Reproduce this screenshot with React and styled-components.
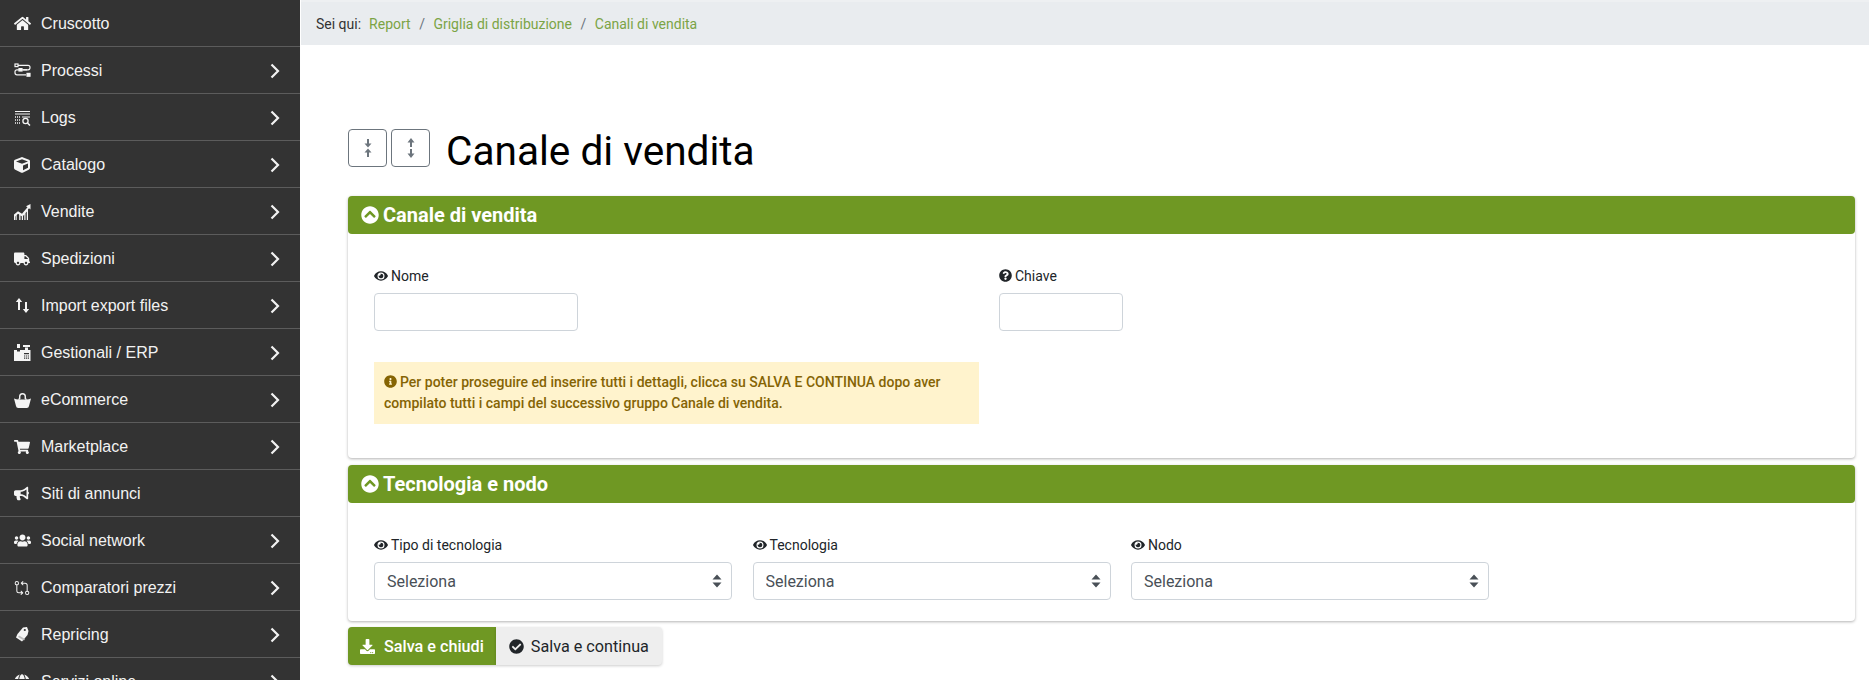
import React from 'react';
import styled, { createGlobalStyle } from 'styled-components';
import {
  FaHome, FaCube, FaTruck, FaShoppingCart, FaBullhorn, FaUsers, FaGlobe,
  FaEye, FaQuestionCircle, FaInfoCircle, FaChevronCircleUp, FaDownload, FaCheckCircle,
} from 'react-icons/fa';
import { GoGitCompare } from 'react-icons/go';

const Global = createGlobalStyle`
  html, body { margin: 0; padding: 0; background: #fff; }
  body { font-family: Roboto, "Liberation Sans", sans-serif; font-size: 14px; color: #212529; }
  * { box-sizing: border-box; }
`;

const Page = styled.div`
  display: flex;
  width: 1869px;
  height: 680px;
  overflow: hidden;
`;

const Sidebar = styled.nav`
  flex: 0 0 300px;
  background: #333;
  height: 680px;
  overflow: hidden;
`;

const NavRow = styled.a`
  display: flex;
  align-items: center;
  height: 47px;
  padding: 1px 20px 0 14px;
  border-bottom: 1px solid #5c5c5c;
  color: #f2f2f2;
  font: 16px/20px "Liberation Sans", Arial, sans-serif;
`;

const NavIcon = styled.span`
  flex: 0 0 27px;
  display: flex;
  align-items: center;
  color: #f5f5f5;
`;

const NavLabel = styled.span`
  flex: 1;
`;

const Main = styled.main`
  flex: 1;
  min-width: 0;
`;

const Breadcrumb = styled.div`
  display: flex;
  align-items: center;
  height: 45px;
  margin-left: 1px;
  padding-left: 15px;
  background: #e9ecef;
  border-top: 2px solid #eef0f2;
  color: #333;
  font-size: 14px;
`;

const Here = styled.span`
  margin-right: 8px;
`;

const Crumb = styled.a`
  color: #7ba445;
`;

const Sep = styled.span`
  color: #6c757d;
  margin: 0 8.5px;
`;

const Content = styled.div`
  padding: 84px 14.5px 0 48px;
`;

const TitleRow = styled.div`
  display: flex;
  align-items: center;
  height: 38px;
  margin-bottom: 29px;
`;

const ToggleBtn = styled.button`
  width: 39px;
  height: 38px;
  margin-right: 4px;
  padding: 0;
  display: flex;
  align-items: center;
  justify-content: center;
  background: #fff;
  border: 1px solid #6c757d;
  border-radius: 4px;
`;

const Title = styled.h1`
  margin: 0 0 0 12px;
  padding-top: 6px;
  font-size: 40.6px;
  font-weight: 400;
  line-height: 48px;
  color: #000;
`;

const Card = styled.section`
  background: #fff;
  border-radius: 4px;
  box-shadow: 0 1px 3px rgba(0, 0, 0, 0.3);
  & + & {
    margin-top: 7px;
  }
`;

const CardHead = styled.header`
  display: flex;
  align-items: center;
  gap: 4px;
  height: 38px;
  padding-left: 13px;
  background: #6f9823;
  border-radius: 4px;
  color: #fff;
  font-size: 20px;
  font-weight: 700;
`;

const CardBody = styled.div`
  padding: ${p => p.$pad};
`;

const FieldRow = styled.div`
  display: flex;
  gap: ${p => p.$gap}px;
`;

const Field = styled.div`
  width: ${p => p.$w}px;
`;

const Label = styled.label`
  display: flex;
  align-items: center;
  gap: 3px;
  height: 21px;
  margin-bottom: 7px;
  font-size: 14px;
  color: #212529;
`;

const TextInput = styled.input`
  display: block;
  width: 100%;
  height: 38px;
  background: #fff;
  border: 1px solid #ced4da;
  border-radius: 4px;
`;

const SelectWrap = styled.div`
  position: relative;
`;

const Select = styled.select`
  display: block;
  width: 100%;
  height: 38px;
  padding: 0 12px;
  appearance: none;
  background: #fff;
  border: 1px solid #ced4da;
  border-radius: 4px;
  color: #495057;
  font: 16px Roboto, sans-serif;
`;

const Caret = styled.svg`
  position: absolute;
  right: 10px;
  top: 12px;
  pointer-events: none;
`;

const Alert = styled.div`
  width: 605px;
  height: 62px;
  margin-top: 31px;
  padding: 10px;
  background: #fff3cd;
  color: #856404;
  font-size: 14px;
  font-weight: 500;
  line-height: 21px;
  svg { vertical-align: -1px; margin-right: 3px; }
`;

const Actions = styled.div`
  display: flex;
  margin-top: 6px;
`;

const ActionBtn = styled.button`
  display: flex;
  align-items: center;
  gap: ${p => (p.$primary ? 9 : 7)}px;
  height: 38px;
  padding: ${p => (p.$primary ? '0 12px' : '0 13px')};
  border: 0;
  border-radius: ${p => (p.$primary ? '4px 0 0 4px' : '0 4px 4px 0')};
  background: ${p => (p.$primary ? '#6f9823' : '#eee')};
  color: ${p => (p.$primary ? '#fff' : '#212529')};
  font: ${p => (p.$primary ? 500 : 400)} 16.2px Roboto, sans-serif;
  box-shadow: 0 1px 3px rgba(0, 0, 0, 0.2);
`;

const Chevron = () => (
  <svg width="10" height="16" viewBox="0 0 10 16" fill="none" stroke="#f2f2f2" strokeWidth="2.2">
    <path d="M1.5 1.5 8 8l-6.5 6.5" />
  </svg>
);

const ProcessIcon = () => (
  <svg width="17" height="16" viewBox="0 0 17 16" fill="none" stroke="#f5f5f5" strokeWidth="1.2">
    <rect x="1" y="1" width="3" height="2.6" />
    <path d="M4 2.3h10q2 0 2 2v.5q0 2-2 2H3q-2 0-2 2v1q0 2 2 2h9" />
    <rect x="5" y="5.6" width="3" height="2.4" fill="#f5f5f5" />
    <path d="M9 6.8h4" />
    <rect x="13" y="10.4" width="3" height="2.8" fill="#f5f5f5" />
  </svg>
);

const LogsIcon = () => (
  <svg width="17" height="16" viewBox="0 0 17 16" fill="none" stroke="#f5f5f5">
    <path d="M1 1.5h15M1 4h15" strokeWidth="1" />
    <path d="M1 7h3M1 10h3M1 13h3M5 7h1M5 10h1M5 13h1" strokeWidth="1.3" strokeDasharray="1 1" />
    <path d="M8 7h8" strokeWidth="1" />
    <circle cx="11.5" cy="11" r="2.6" strokeWidth="1.3" />
    <path d="m13.5 13 2.5 2.5" strokeWidth="1.5" />
  </svg>
);

const SalesIcon = () => (
  <svg width="17" height="16" viewBox="0 0 17 16" fill="#f5f5f5">
    <path d="M0 16v-4.500L4 8.500l4 2.500 6-7V16h-1.200V7.500L11.500 9v7h-1.200v-5.500L9 12v4H7.800v-3.800l-1.300-.8v4.600H5.200v-5.500L4 9.800l-1.300 1.100V16H1.500v-4L1 12.500V16Z" />
    <path d="m0 10.600 4-3.400 4 2.500 5.500-6.500-1.500-1L16.500 0v5.500L15 4.300 8.300 12 4 9.400 0 12.800Z" />
  </svg>
);

const ArrowsIcon = () => (
  <svg width="17" height="17" viewBox="0 0 17 17" fill="#f5f5f5">
    <path d="M5 1 8.200 5H6v8H4V5H1.800ZM12 16l-3.200-4H11V5h2v7h2.200Z" />
  </svg>
);

const ErpIcon = () => (
  <svg width="17" height="17" viewBox="0 0 17 17" fill="#f5f5f5">
    <path d="M3 0h3v4H3zM9 1h7v2H9zM11 3.500h3V6h-3z" />
    <path d="M0 6h3v1.500h3V6h10.500v11H0Z" />
    <path d="M10 9h5v1.200h-5zM10 11.400h1.200v1.200H10zm1.900 0h1.200v1.200h-1.200zm1.900 0H15v1.200h-1.200zM10 13.600h1.200v1.200H10zm1.900 0h1.200v1.200h-1.200zm1.900 0H15v1.200h-1.200z" fill="#333" />
  </svg>
);

const BasketIcon = () => (
  <svg width="17" height="16" viewBox="0 0 17 16" fill="#f5f5f5">
    <path d="M5 7V4.500a3.500 3.500 0 0 1 7 0V7h-1.400V4.500a2.100 2.100 0 0 0-4.200 0V7Z" />
    <path d="M0 6.400c1.500.6 3 1 4.400 1.100v-.9h1.200v1h5.800v-1h1.200v.9c1.400-.1 2.900-.5 4.400-1.100L15 14q-.3 2-2.200 2H4.200Q2.300 16 2 14Z" />
  </svg>
);

const TagIcon = () => (
  <svg width="17" height="17" viewBox="0 0 17 17" fill="#f5f5f5">
    <path d="M9 1.500 13 1l1.500 4-1 4L8 15.500 2 11.500 3.500 8Z" />
    <circle cx="10.800" cy="4" r="1.100" fill="#333" />
    <path d="M4 11l6 3.500 1-1.500-6-3.500Z" fill="#bbb" />
  </svg>
);

const Toggle = ({ d }) => (
  <svg width="12" height="24" viewBox="0 0 12 24" fill="#6c757d">
    <path d={d} />
  </svg>
);

const navItems = [
  { label: 'Cruscotto', icon: <FaHome size={17} />, leaf: true },
  { label: 'Processi', icon: <ProcessIcon /> },
  { label: 'Logs', icon: <LogsIcon /> },
  { label: 'Catalogo', icon: <FaCube size={16} /> },
  { label: 'Vendite', icon: <SalesIcon /> },
  { label: 'Spedizioni', icon: <FaTruck size={16} /> },
  { label: 'Import export files', icon: <ArrowsIcon /> },
  { label: 'Gestionali / ERP', icon: <ErpIcon /> },
  { label: 'eCommerce', icon: <BasketIcon /> },
  { label: 'Marketplace', icon: <FaShoppingCart size={16} /> },
  { label: 'Siti di annunci', icon: <FaBullhorn size={15} />, leaf: true },
  { label: 'Social network', icon: <FaUsers size={17} /> },
  { label: 'Comparatori prezzi', icon: <GoGitCompare size={16} /> },
  { label: 'Repricing', icon: <TagIcon /> },
  { label: 'Servizi online', icon: <FaGlobe size={16} /> },
];

const SelectField = ({ label }) => (
  <Field $w={358}>
    <Label><FaEye size={14} />{label}</Label>
    <SelectWrap>
      <Select defaultValue="">
        <option value="">Seleziona</option>
      </Select>
      <Caret width="10" height="14" viewBox="0 0 10 14" fill="#495057">
        <path d="M5 0.500 9.500 5.500H.5ZM5 13.500.5 8.500h9Z" />
      </Caret>
    </SelectWrap>
  </Field>
);

export default function App() {
  return (
    <Page>
      <Global />
      <Sidebar>
        {navItems.map(item => (
          <NavRow key={item.label}>
            <NavIcon>{item.icon}</NavIcon>
            <NavLabel>{item.label}</NavLabel>
            {!item.leaf && <Chevron />}
          </NavRow>
        ))}
      </Sidebar>
      <Main>
        <Breadcrumb>
          <Here>Sei qui:</Here>
          <Crumb>Report</Crumb><Sep>/</Sep>
          <Crumb>Griglia di distribuzione</Crumb><Sep>/</Sep>
          <Crumb>Canali di vendita</Crumb>
        </Breadcrumb>
        <Content>
          <TitleRow>
            <ToggleBtn><Toggle d="M6 11.500 2.500 7.500H5V3h2v4.500h2.500ZM6 12.500l3.500 4H7V21H5v-4.500H2.500Z" /></ToggleBtn>
            <ToggleBtn><Toggle d="M6 2 9.500 6.500H7V11H5V6.500H2.500ZM6 22l-3.500-4.500H5V13h2v4.500h2.500Z" /></ToggleBtn>
            <Title>Canale di vendita</Title>
          </TitleRow>

          <Card>
            <CardHead><FaChevronCircleUp size={18} />Canale di vendita</CardHead>
            <CardBody $pad="31px 26px 34px">
              <FieldRow $gap={421}>
                <Field $w={204}>
                  <Label><FaEye size={14} />Nome</Label>
                  <TextInput />
                </Field>
                <Field $w={124}>
                  <Label><FaQuestionCircle size={13} />Chiave</Label>
                  <TextInput />
                </Field>
              </FieldRow>
              <Alert>
                <FaInfoCircle size={13} />Per poter proseguire ed inserire tutti i dettagli, clicca su SALVA E CONTINUA dopo aver compilato tutti i campi del successivo gruppo Canale di vendita.
              </Alert>
            </CardBody>
          </Card>

          <Card>
            <CardHead><FaChevronCircleUp size={18} />Tecnologia e nodo</CardHead>
            <CardBody $pad="31px 26px 21px">
              <FieldRow $gap={20.5}>
                <SelectField label="Tipo di tecnologia" />
                <SelectField label="Tecnologia" />
                <SelectField label="Nodo" />
              </FieldRow>
            </CardBody>
          </Card>

          <Actions>
            <ActionBtn $primary><FaDownload size={15} />Salva e chiudi</ActionBtn>
            <ActionBtn><FaCheckCircle size={15} />Salva e continua</ActionBtn>
          </Actions>
        </Content>
      </Main>
    </Page>
  );
}
